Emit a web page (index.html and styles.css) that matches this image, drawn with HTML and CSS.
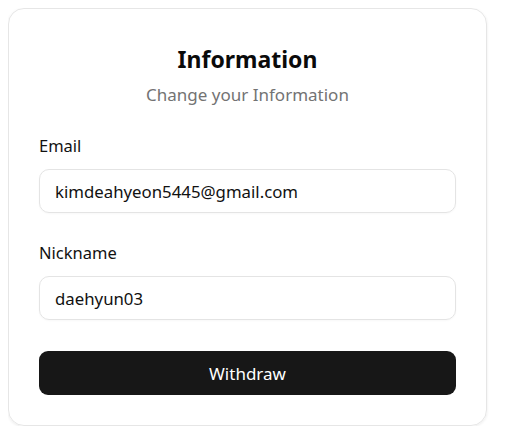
FILE: index.html
```
<!DOCTYPE html>
<html lang="en">
<head>
<meta charset="utf-8">
<link rel="stylesheet" href="styles.css">
</head>
<body>
<div class="card">
  <h1 class="title">Information</h1>
  <p class="subtitle">Change your Information</p>
  <div class="field">
    <label class="label">Email</label>
    <div class="input">kimdeahyeon5445@gmail.com</div>
  </div>
  <div class="field">
    <label class="label">Nickname</label>
    <div class="input">daehyun03</div>
  </div>
  <button class="btn">Withdraw</button>
</div>
</body>
</html>
```
FILE: styles.css
```
* { box-sizing: border-box; }
body {
  margin: 8px;
  background: #fff;
  font-family: "Noto Sans", "Noto Sans CJK KR", sans-serif;
  color: #111;
}
.card {
  width: 479px;
  height: 418px;
  border: 1px solid #e6e6e6;
  border-radius: 16px;
  box-shadow: 0 1px 3px rgba(0,0,0,0.08);
  padding: 35px 30px 30px;
  display: flex;
  flex-direction: column;
}
.title {
  margin: 0;
  text-align: center;
  font-size: 23px;
  line-height: 30px;
  font-weight: 700;
  color: #0a0a0a;
}
.subtitle {
  margin: 9px 0 0;
  text-align: center;
  font-size: 17px;
  line-height: 24px;
  color: #737373;
}
.field {
  display: flex;
  flex-direction: column;
}
.field + .field { margin-top: 28px; }
.subtitle + .field { margin-top: 27px; }
.label {
  font-size: 16.5px;
  line-height: 24px;
  color: #111;
}
.input {
  margin-top: 11px;
  height: 44px;
  border: 1px solid #e4e4e4;
  border-radius: 10px;
  padding: 0 15px;
  display: flex;
  align-items: center;
  font-size: 16.8px;
  color: #111;
  box-shadow: 0 1px 2px rgba(0,0,0,0.03);
}
.btn {
  margin-top: 31px;
  height: 45px;
  border: none;
  border-radius: 9px;
  background: #171717;
  color: #fff;
  font-family: inherit;
  font-size: 17px;
}
```
